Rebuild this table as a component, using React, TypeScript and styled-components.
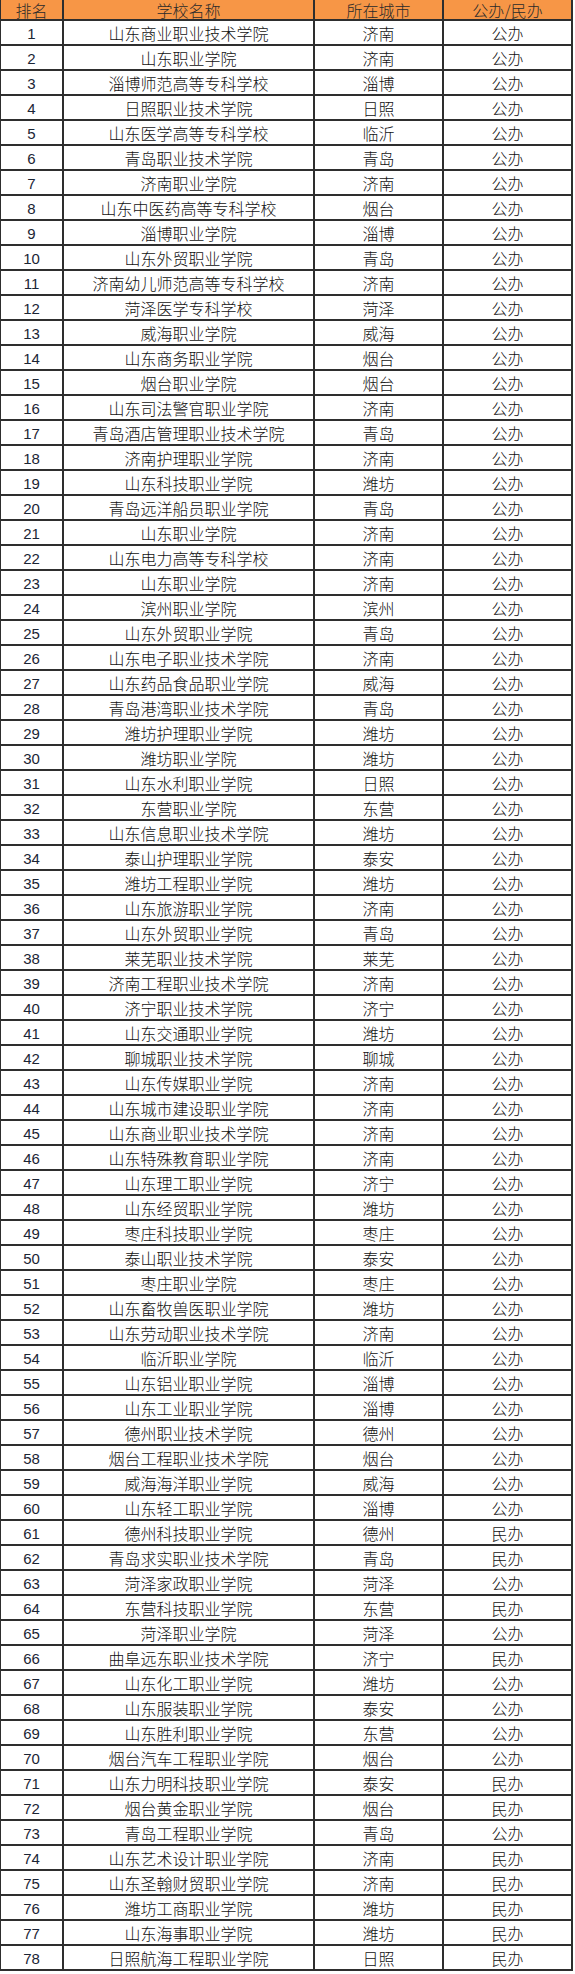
import styled, { createGlobalStyle } from 'styled-components';

const GlobalStyle = createGlobalStyle`
  html, body {
    margin: 0;
    padding: 0;
    background: #ffffff;
  }
`;

type School = [string, string, string];

const schools: School[] = [
  ['山东商业职业技术学院', '济南', '公办'],
  ['山东职业学院', '济南', '公办'],
  ['淄博师范高等专科学校', '淄博', '公办'],
  ['日照职业技术学院', '日照', '公办'],
  ['山东医学高等专科学校', '临沂', '公办'],
  ['青岛职业技术学院', '青岛', '公办'],
  ['济南职业学院', '济南', '公办'],
  ['山东中医药高等专科学校', '烟台', '公办'],
  ['淄博职业学院', '淄博', '公办'],
  ['山东外贸职业学院', '青岛', '公办'],
  ['济南幼儿师范高等专科学校', '济南', '公办'],
  ['菏泽医学专科学校', '菏泽', '公办'],
  ['威海职业学院', '威海', '公办'],
  ['山东商务职业学院', '烟台', '公办'],
  ['烟台职业学院', '烟台', '公办'],
  ['山东司法警官职业学院', '济南', '公办'],
  ['青岛酒店管理职业技术学院', '青岛', '公办'],
  ['济南护理职业学院', '济南', '公办'],
  ['山东科技职业学院', '潍坊', '公办'],
  ['青岛远洋船员职业学院', '青岛', '公办'],
  ['山东职业学院', '济南', '公办'],
  ['山东电力高等专科学校', '济南', '公办'],
  ['山东职业学院', '济南', '公办'],
  ['滨州职业学院', '滨州', '公办'],
  ['山东外贸职业学院', '青岛', '公办'],
  ['山东电子职业技术学院', '济南', '公办'],
  ['山东药品食品职业学院', '威海', '公办'],
  ['青岛港湾职业技术学院', '青岛', '公办'],
  ['潍坊护理职业学院', '潍坊', '公办'],
  ['潍坊职业学院', '潍坊', '公办'],
  ['山东水利职业学院', '日照', '公办'],
  ['东营职业学院', '东营', '公办'],
  ['山东信息职业技术学院', '潍坊', '公办'],
  ['泰山护理职业学院', '泰安', '公办'],
  ['潍坊工程职业学院', '潍坊', '公办'],
  ['山东旅游职业学院', '济南', '公办'],
  ['山东外贸职业学院', '青岛', '公办'],
  ['莱芜职业技术学院', '莱芜', '公办'],
  ['济南工程职业技术学院', '济南', '公办'],
  ['济宁职业技术学院', '济宁', '公办'],
  ['山东交通职业学院', '潍坊', '公办'],
  ['聊城职业技术学院', '聊城', '公办'],
  ['山东传媒职业学院', '济南', '公办'],
  ['山东城市建设职业学院', '济南', '公办'],
  ['山东商业职业技术学院', '济南', '公办'],
  ['山东特殊教育职业学院', '济南', '公办'],
  ['山东理工职业学院', '济宁', '公办'],
  ['山东经贸职业学院', '潍坊', '公办'],
  ['枣庄科技职业学院', '枣庄', '公办'],
  ['泰山职业技术学院', '泰安', '公办'],
  ['枣庄职业学院', '枣庄', '公办'],
  ['山东畜牧兽医职业学院', '潍坊', '公办'],
  ['山东劳动职业技术学院', '济南', '公办'],
  ['临沂职业学院', '临沂', '公办'],
  ['山东铝业职业学院', '淄博', '公办'],
  ['山东工业职业学院', '淄博', '公办'],
  ['德州职业技术学院', '德州', '公办'],
  ['烟台工程职业技术学院', '烟台', '公办'],
  ['威海海洋职业学院', '威海', '公办'],
  ['山东轻工职业学院', '淄博', '公办'],
  ['德州科技职业学院', '德州', '民办'],
  ['青岛求实职业技术学院', '青岛', '民办'],
  ['菏泽家政职业学院', '菏泽', '公办'],
  ['东营科技职业学院', '东营', '民办'],
  ['菏泽职业学院', '菏泽', '公办'],
  ['曲阜远东职业技术学院', '济宁', '民办'],
  ['山东化工职业学院', '潍坊', '公办'],
  ['山东服装职业学院', '泰安', '公办'],
  ['山东胜利职业学院', '东营', '公办'],
  ['烟台汽车工程职业学院', '烟台', '公办'],
  ['山东力明科技职业学院', '泰安', '民办'],
  ['烟台黄金职业学院', '烟台', '民办'],
  ['青岛工程职业学院', '青岛', '公办'],
  ['山东艺术设计职业学院', '济南', '民办'],
  ['山东圣翰财贸职业学院', '济南', '民办'],
  ['潍坊工商职业学院', '潍坊', '民办'],
  ['山东海事职业学院', '潍坊', '民办'],
  ['日照航海工程职业学院', '日照', '民办'],
];

const App = () => {
  return (
    <>
      <GlobalStyle />
      <Table>
        <HeaderRow>
          <Cell>排名</Cell>
          <Cell>学校名称</Cell>
          <Cell>所在城市</Cell>
          <Cell>公办/民办</Cell>
        </HeaderRow>
        {schools.map(([name, city, type], i) => (
          <Row key={i}>
            <Cell $number>{i + 1}</Cell>
            <Cell>{name}</Cell>
            <Cell>{city}</Cell>
            <Cell>{type}</Cell>
          </Row>
        ))}
      </Table>
    </>
  );
};

const Table = styled.div`
  display: flex;
  flex-direction: column;
  width: 573px;
  font-family: 'Noto Sans CJK SC', 'Noto Sans', sans-serif;
  font-size: 16px;
  color: #111111;
`;

const Row = styled.div`
  display: grid;
  grid-template-columns: 64px 251px 129px 129px;
  height: 25px;
`;

const HeaderRow = styled(Row)`
  height: 21px;
  background: #f79646;
  color: #2a2a2a;
`;

const Cell = styled.div<{ $number?: boolean }>`
  box-sizing: border-box;
  display: flex;
  align-items: center;
  justify-content: center;
  border-right: 2px solid #2e2e2e;
  border-bottom: 2px solid #2e2e2e;
  line-height: 1;
  white-space: nowrap;
  font-weight: 300;
  padding-top: 1px;

  &:first-child {
    border-left: 1px solid #2e2e2e;
  }

  ${({ $number }) =>
    $number &&
    `
    font-family: 'Liberation Sans', Arial, sans-serif;
    font-size: 15px;
    font-weight: 400;
    color: #1b2535;
  `}
`;

export default App;
